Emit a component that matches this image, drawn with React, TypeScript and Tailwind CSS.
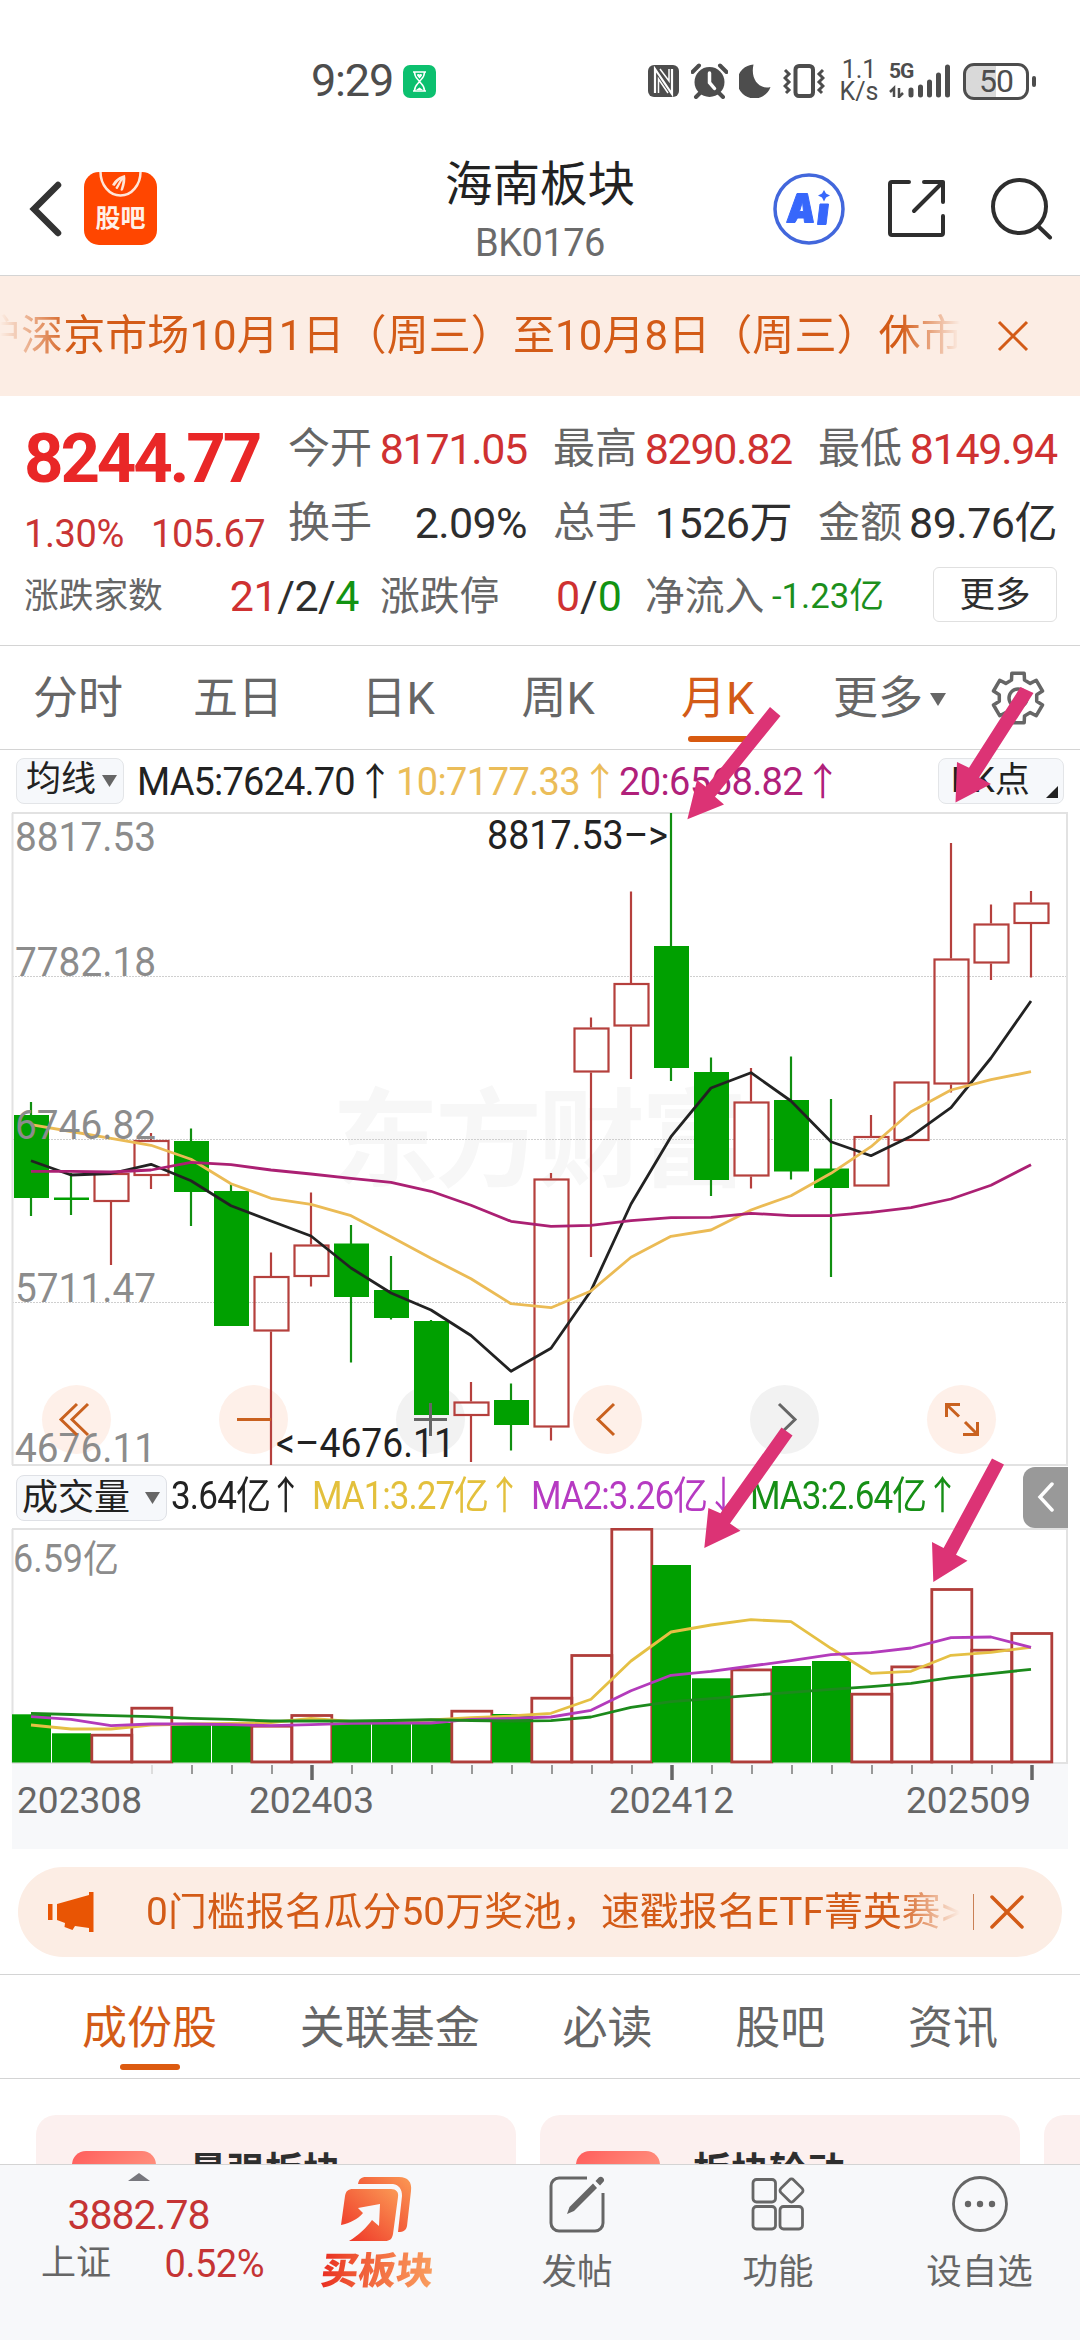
import React from "react";

const FONT = "font-[Roboto,'Noto_Sans_CJK_SC',sans-serif]";

type Candle = { up: boolean; high: number; top: number; bottom: number; low: number };

const c = (up: boolean, high: number, top: number, bottom: number, low: number): Candle => ({ up, high, top, bottom, low });

const CANDLES: Candle[] = [
  c(false, 1102, 1115, 1198, 1216),
  c(false, 1173, 1197.5, 1200, 1215),
  c(true, 1173, 1173, 1202, 1265),
  c(true, 1133, 1140, 1176, 1189),
  c(false, 1128.5, 1141, 1192, 1226),
  c(false, 1184, 1191, 1326, 1326),
  c(true, 1252.5, 1276, 1331.5, 1465),
  c(true, 1192.5, 1244.5, 1277, 1286.5),
  c(false, 1225, 1243.5, 1297, 1362.5),
  c(false, 1256, 1290, 1318, 1319.5),
  c(false, 1320, 1321, 1415, 1415),
  c(true, 1382, 1401.5, 1416, 1462),
  c(false, 1383.5, 1400, 1425, 1450.5),
  c(true, 1173, 1178.5, 1427.5, 1440.5),
  c(true, 1017.5, 1027.5, 1072.5, 1257),
  c(true, 891.5, 983, 1026.5, 1079),
  c(false, 813, 946, 1068, 1081),
  c(false, 1057.5, 1072, 1180, 1196),
  c(true, 1068, 1101.5, 1176.5, 1188.5),
  c(false, 1056.5, 1100, 1171.5, 1179.5),
  c(false, 1099, 1168.5, 1188, 1277),
  c(true, 1115, 1136, 1186.5, 1186.5),
  c(true, 1081.5, 1081.5, 1141, 1141),
  c(true, 843, 958.5, 1084.5, 1092.5),
  c(true, 904.5, 923.5, 963.5, 980),
  c(true, 891, 902.5, 924, 977.5),
];

const MA5 = [1160.7, 1175, 1173.5, 1164.3, 1180.7, 1205.7, 1221, 1236, 1268, 1293, 1310, 1335.5, 1371.3, 1348.3, 1290.7, 1204, 1136.7, 1088, 1072.7, 1101, 1141.7, 1155.7, 1136.3, 1107.7, 1058, 1001];
const MA10 = [1124.7, 1131.5, 1138.3, 1145.3, 1159.3, 1183.7, 1198.3, 1204.3, 1215.7, 1236.7, 1258.3, 1278.7, 1303.7, 1307.7, 1291, 1257.3, 1236.3, 1230, 1210, 1195.7, 1173.3, 1146.7, 1111.7, 1090, 1079.7, 1071.7];
const MA20 = [1171.3, 1171.3, 1172, 1170, 1162.3, 1164.7, 1170, 1174, 1178.3, 1182.3, 1191.3, 1205.3, 1221.3, 1226.3, 1225.3, 1220.7, 1217.7, 1217.3, 1213.3, 1215.7, 1215.7, 1212.3, 1207.7, 1199, 1185.3, 1164.7];

const VOLUME_TOPS = [1714.3, 1733.3, 1734, 1707, 1724.5, 1723.5, 1725, 1714.3, 1723.5, 1723, 1723, 1710, 1714, 1697, 1654.3, 1528, 1565, 1678.3, 1668.7, 1666, 1661, 1693, 1665.7, 1588.3, 1649, 1632.3];
const VMA1 = [1725, 1729, 1729, 1725, 1724, 1723.5, 1722.5, 1718.5, 1721.5, 1721.7, 1720, 1717.7, 1716, 1713.3, 1699.3, 1661, 1632, 1625, 1619.7, 1621.7, 1648.3, 1673.3, 1671.3, 1655.3, 1652.3, 1647.3];
const VMA2 = [1716.7, 1719.3, 1725.7, 1724, 1724, 1724.7, 1725.7, 1724.7, 1723.3, 1723, 1723, 1719.3, 1718.3, 1717, 1710.3, 1690.7, 1675.3, 1671.3, 1666, 1660.7, 1654.7, 1652.7, 1648, 1637.7, 1637, 1647.3];
const VMA3 = [1713.3, 1714.5, 1715.6, 1716.7, 1718.3, 1719.3, 1721, 1721, 1721, 1720.5, 1719.7, 1720.5, 1721, 1720.7, 1717, 1707.3, 1701.7, 1698.7, 1695.3, 1692.3, 1689.3, 1686.7, 1683.3, 1677.7, 1673.7, 1669.3];

const cx = (i: number) => 31 + 40 * i;
const line = (ys: number[]) => ys.map((y, i) => `${cx(i)},${y}`).join(" ");

const GREEN = "#00a000";
const RED = "#b5403d";

function gearPath() {
  const pts: string[] = [];
  for (let k = 0; k < 6; k++) {
    const base = -90 + k * 60;
    for (const [da, r] of [[-20, 19], [-14, 25.5], [14, 25.5], [20, 19]]) {
      const a = ((base + da) * Math.PI) / 180;
      pts.push(`${(27 + r * Math.cos(a)).toFixed(1)},${(27 + r * Math.sin(a)).toFixed(1)}`);
    }
  }
  return `M${pts.join("L")}Z`;
}

function StatusBar() {
  return (
    <div className="flex h-[110px] items-center pt-[52px] text-[#4d4d4d]">
      <span className="ml-[311px] w-[92px] text-[45px] leading-[58px] tracking-[-1.200px]">9:29</span>
      <svg className="h-[33px] w-[33px]" viewBox="0 0 33 33">
        <rect width="33" height="33" rx="7" fill="#0cc06f" />
        <path d="M10 7h13M10 26h13M11.500 7c0 6 3.500 7 5 9.500c1.500-2.500 5-3.500 5-9.500M11.500 26c0-6 3.500-7 5-9.500c1.500 2.500 5 3.500 5 9.500" fill="none" stroke="#fff" strokeWidth="1.500" />
        <path d="M16.500 13.500l-2.500-3a1.400 1.400 0 0 1 2.500-1a1.400 1.400 0 0 1 2.500 1zM13 25l3.500-2.500l3.500 2.500z" fill="#fff" />
      </svg>
      <svg className="ml-[212px] h-[34px] w-[31px]" viewBox="0 0 31 34">
        <rect x="0" y="1" width="31" height="32" rx="6" fill="#4d4d4d" />
        <path d="M7 29V5L24 30V5" fill="none" stroke="#fff" strokeWidth="2.200" />
        <path d="M10.500 29V15L20 29M12 5l9 12V5" fill="none" stroke="#fff" strokeWidth="1.500" />
      </svg>
      <svg className="ml-[12px] h-[36px] w-[37px]" viewBox="0 0 37 36">
        <circle cx="18.500" cy="19" r="15" fill="#4d4d4d" />
        <path d="M1.500 9L8 2.500M35.500 9L29 2.500M5 34l4-4M32 34l-4-4" stroke="#4d4d4d" strokeWidth="4" strokeLinecap="round" />
        <path d="M18.500 10v9.500l5 6" fill="none" stroke="#fff" strokeWidth="3.500" strokeLinecap="round" />
      </svg>
      <svg className="ml-[11px] h-[34px] w-[32px]" viewBox="0 0 32 34">
        <path d="M14.500 0.500A17 17 0 1 0 31.500 23C21 26 11 16 14.500 0.500z" fill="#4d4d4d" />
      </svg>
      <svg className="ml-[12px] h-[34px] w-[42px]" viewBox="0 0 42 34">
        <rect x="12.500" y="2" width="17.500" height="30" rx="3.500" fill="none" stroke="#4d4d4d" strokeWidth="4" />
        <path d="M2 6l4 4-4 4 4 4-4 4 4 4-3 3M40 6l-4 4 4 4-4 4 4 4-4 4 3 3" fill="none" stroke="#4d4d4d" strokeWidth="3" />
      </svg>
      <div className="ml-[16px] flex w-[36px] flex-col items-center text-[25px] leading-[22px]">
        <span>1.1</span>
        <span>K/s</span>
      </div>
      <div className="relative ml-[12px] h-[34px] w-[61px]">
        <span className="absolute left-0 top-[-3px] text-[21px] leading-[21px] font-bold tracking-[-1px]">5G</span>
        <svg className="h-[34px] w-[61px]" viewBox="0 0 61 34">
          <path d="M5 33V24L1 28M10 24v9l4-4" fill="none" stroke="#4d4d4d" strokeWidth="2.500" />
          <path d="M22 26v5M31.500 23v8M40.500 18v13M49.500 11v20M58.500 3v28" stroke="#4d4d4d" strokeWidth="5" strokeLinecap="round" />
        </svg>
      </div>
      <div className="ml-[13px] flex h-[37px] w-[66px] items-center justify-center rounded-[11px] border-[3px] border-[#4d4d4d] bg-linear-to-r from-[#d9d9d9] from-50% to-white to-50% text-[32px] leading-[32px] tracking-[-1px]">50</div>
      <div className="ml-[3px] h-[11px] w-[4px] rounded-full bg-[#4d4d4d]" />
    </div>
  );
}

function Header() {
  return (
    <div className="flex h-[166px] items-center border-b border-[#d4d4d4] pt-[32px]">
      <div className="flex w-[400px] items-center gap-[20px] pl-[28px]">
        <svg className="h-[60px] w-[36px]" viewBox="0 0 36 60">
          <path d="M30 6L6 30L30 54" fill="none" stroke="#333" strokeWidth="6.500" strokeLinecap="round" />
        </svg>
        <div className="relative flex h-[73px] w-[73px] justify-center overflow-hidden rounded-[15px] bg-[#ff4600]">
          <svg className="absolute left-0 top-0 h-[30px] w-[73px]" viewBox="0 0 73 30">
            <path d="M16.500 0a20 23.500 0 0 0 40 0" fill="none" stroke="#ffe6d9" strokeWidth="2.500" />
            <path d="M28 13c3-6 8-9 13-10c1 4 0 10-2 15c-1 1-2 1-2.500 0c1-4 2-7 2-10c-2 3-3 6-5 9c-1 0-2-0.500-2-1.500c2-3 3-5 5-8c-3 2-4 4-6 6.500z" fill="#ffe6d9" />
          </svg>
          <span className="mt-[33px] text-[25px] leading-[28px] font-bold text-[#fff0e8]">股吧</span>
        </div>
      </div>
      <div className="mt-[11px] flex w-[280px] flex-col items-center">
        <h1 className="text-[47.500px] leading-[60px] text-[#222]">海南板块</h1>
        <span className="mt-[-2px] text-[38px] leading-[60px] tracking-[-0.500px] text-[#6b6b6b]">BK0176</span>
      </div>
      <div className="flex w-[400px] items-center pl-[93px]">
        <svg className="h-[72px] w-[72px]" viewBox="0 0 72 72">
          <circle cx="36" cy="36" r="34" fill="none" stroke="#4267dc" strokeWidth="3.500" />
          <path fillRule="evenodd" d="M24 20.500h10.500L40.500 49.500H31.500L31 45H24.500L22 49.500H13.500zM29.500 28.500L26.500 38.500H30.500z" fill="#3767fb" stroke="#3767fb" strokeWidth="1" strokeLinejoin="round" />
          <path d="M47 31h8.500L53 51.500h-8.500z" fill="#3767fb" stroke="#3767fb" strokeWidth="1" strokeLinejoin="round" />
          <path d="M51 17l2 3.500l4 2l-4 2l-2 4l-2-4l-4-2l4-2z" fill="#3767fb" />
        </svg>
        <svg className="ml-[41px] h-[61px] w-[61px]" viewBox="0 0 61 61">
          <path d="M23 4H6a2 2 0 0 0-2 2v49a2 2 0 0 0 2 2h49a2 2 0 0 0 2-2V38M38 4h19v20M57 4L28 33" fill="none" stroke="#2e2e2e" strokeWidth="4" strokeLinecap="round" strokeLinejoin="round" />
        </svg>
        <svg className="ml-[44px] h-[62px] w-[62px]" viewBox="0 0 62 62">
          <circle cx="28.500" cy="28.500" r="26.500" fill="none" stroke="#2e2e2e" strokeWidth="4" />
          <path d="M47 48l12 11.500" stroke="#2e2e2e" strokeWidth="4" strokeLinecap="round" />
        </svg>
      </div>
    </div>
  );
}

function Notice() {
  return (
    <div className="flex h-[120px] items-center bg-[#fcede4] text-[#d35b17]">
      <div className="w-[960px] overflow-hidden whitespace-nowrap mask-[linear-gradient(to_right,transparent_0,black_70px,black_900px,transparent_960px)]">
        <span className="ml-[-21px] text-[42px] leading-[60px] tracking-[0.080px]">沪深京市场10月1日（周三）至10月8日（周三）休市</span>
      </div>
      <svg className="ml-[37px] h-[32px] w-[32px]" viewBox="0 0 32 32">
        <path d="M2 2l28 28M30 2L2 30" stroke="#d35b17" strokeWidth="3" />
      </svg>
    </div>
  );
}

function Stat({ label, value, className }: { label: string; value: string; className: string }) {
  return (
    <div className="flex h-[50px] items-center justify-between pt-[3px] whitespace-nowrap">
      <span className="text-[42px] leading-[50px] text-[#666]">{label}</span>
      <span className={`text-[43px] leading-[50px] ${className}`}>{value}</span>
    </div>
  );
}

function Quote() {
  return (
    <div className="h-[249px]">
      <div className="flex h-[171px]">
        <div className="w-[288px] pl-[24px] text-[#c93434]">
          <div className="mt-[23px] text-[69px] leading-[80px] font-bold tracking-[-3.200px] text-[#e92727]">8244.77</div>
          <div className="mt-[10px] flex gap-[27px] text-[38px] leading-[50px] tracking-[-0.400px]">
            <span>1.30%</span>
            <span>105.67</span>
          </div>
        </div>
        <div className="mt-[26px] grid w-[769px] grid-cols-3 content-start gap-x-[26px] gap-y-[24px]">
          <Stat label="今开" value="8171.05" className="tracking-[-1.300px] text-[#cf3131]" />
          <Stat label="最高" value="8290.82" className="tracking-[-1.300px] text-[#cf3131]" />
          <Stat label="最低" value="8149.94" className="tracking-[-1.300px] text-[#cf3131]" />
          <Stat label="换手" value="2.09%" className="tracking-[-0.600px] text-[#2e2e2e]" />
          <Stat label="总手" value="1526万" className="tracking-[-0.500px] text-[#2e2e2e]" />
          <Stat label="金额" value="89.76亿" className="tracking-[-0.500px] text-[#2e2e2e]" />
        </div>
      </div>
      <div className="flex h-[55px] items-center whitespace-nowrap text-[#666]">
        <span className="mt-[4px] ml-[24px] w-[140px] text-[34.700px]">涨跌家数</span>
        <span className="mt-[3px] w-[195px] text-right text-[43px] tracking-[-0.500px] text-[#2e2e2e]">
          <span className="text-[#cf3131]">21</span>/2/<span className="text-[#129312]">4</span>
        </span>
        <span className="mt-[4px] ml-[21px] w-[120px] text-[39.800px]">涨跌停</span>
        <span className="mt-[3px] w-[122px] text-right text-[43px] text-[#2e2e2e]">
          <span className="text-[#cf3131]">0</span>/<span className="text-[#129312]">0</span>
        </span>
        <span className="mt-[4px] ml-[23px] w-[127px] text-[39.800px]">净流入</span>
        <span className="mt-[3px] w-[161px] text-[34.700px] text-[#1c8f1c]">-1.23亿</span>
        <button className="h-[55px] w-[124px] rounded-[6px] border border-[#e0e0e0] text-[35.500px] leading-[50px] text-[#2e2e2e]">更多</button>
      </div>
    </div>
  );
}

function PeriodTabs() {
  return (
    <div className="flex h-[105px] items-center border-y border-[#d4d4d4] pt-[3px] text-[45px] text-[#666]">
      {["分时", "五日", "日K", "周K"].map((t) => (
        <span key={t} className="-ml-[2px] w-[162px] pr-[2px] text-center">{t}</span>
      ))}
      <span className="relative flex h-full w-[160px] items-center justify-center pr-[5px] text-[#d35b17]">
        月K
        <span className="absolute bottom-[7px] left-[48px] h-[6px] w-[62px] rounded-full bg-[#d85a10]" />
      </span>
      <span className="flex w-[180px] items-center gap-[7px] pl-[33px]">
        更多
        <svg className="h-[13px] w-[16px]" viewBox="0 0 16 13"><path d="M0 0h16L8 13z" fill="#666" /></svg>
      </span>
      <svg className="mb-[3px] ml-[11px] h-[54px] w-[54px]" viewBox="0 0 54 54">
        <path d={gearPath()} fill="none" stroke="#666" strokeWidth="3.500" strokeLinejoin="round" />
        <circle cx="27" cy="27" r="9" fill="none" stroke="#666" strokeWidth="3.500" />
      </svg>
    </div>
  );
}

function MaRow() {
  return (
    <div className="flex h-[62px] items-center pl-[16px] text-[38px] whitespace-nowrap text-[#222]">
      <div className="mb-[1px] flex h-[46px] w-[108px] items-center gap-[6px] rounded-[8px] border border-[#e3e5e8] bg-[#f6f8fb] pl-[9px] text-[35px]">
        均线
        <svg className="h-[12px] w-[15px] shrink-0" viewBox="0 0 15 12"><path d="M0 0h15L7.500 12z" fill="#666" /></svg>
      </div>
      <div className="ml-[13px] flex w-[259px] pt-[2px] tracking-[-0.850px]">
        MA5:7624.70<span className="flex w-[40px] justify-center">↑</span>
      </div>
      <div className="flex w-[223px] pt-[2px] tracking-[-0.600px] text-[#ebbd59]">
        10:7177.33<span className="flex w-[40px] justify-center">↑</span>
      </div>
      <div className="flex w-[223px] pt-[2px] tracking-[-0.600px] text-[#b0207a]">
        20:6568.82<span className="flex w-[40px] justify-center">↑</span>
      </div>
      <div className="relative mr-[16px] ml-auto flex h-[46px] w-[126px] items-center rounded-[8px] border border-[#e3e5e8] bg-[#f6f8fb] pl-[12px] text-[35px]">
        BK点
        <svg className="absolute right-[5px] bottom-[5px] h-[12px] w-[12px]" viewBox="0 0 12 12"><path d="M12 0v12H0z" fill="#222" /></svg>
      </div>
    </div>
  );
}

const AXIS_LABELS = [
  { text: "8817.53", y: 851 },
  { text: "7782.18", y: 976 },
  { text: "6746.82", y: 1138.5 },
  { text: "5711.47", y: 1302 },
  { text: "4676.11", y: 1461.5 },
];

function CandleChart() {
  return (
    <svg className="block h-[654px] w-[1080px] shrink-0" viewBox="0 812 1080 654">
      <text x="332" y="1178" fontSize="107" fontWeight="700" fill="#f7f7f7" textLength="416">东方财富</text>
      {[976.500, 1139.500, 1302.500].map((y) => (
        <path key={y} d={`M12 ${y}H1067`} stroke="#cfcfcf" strokeWidth="1" strokeDasharray="2 1" />
      ))}
      <path d="M12.500 813V1465M1067 813V1465M12 813H1068M12 1465H1068" fill="none" stroke="#e2e2e2" strokeWidth="2" />
      {[76.500, 253.500, 430.500, 607.500, 784.500, 961.500].map((x, i) => (
        <circle key={x} cx={x} cy="1419.500" r="34.500" fill={i === 2 || i === 4 ? "#f2f2f2" : "#fef0e9"} />
      ))}
      {CANDLES.map((k, i) =>
        k.up ? (
          <g key={i} stroke={RED} strokeWidth="2.200" fill="none">
            <path d={`M${cx(i)} ${k.high}V${k.top}M${cx(i)} ${k.bottom}V${k.low}`} />
            <rect x={cx(i) - 16.500} y={k.top + 1} width="34" height={k.bottom - k.top - 2} fill={i === 18 ? "#fff" : "none"} />
          </g>
        ) : (
          <g key={i}>
            <path d={`M${cx(i)} ${k.high}V${k.low}`} stroke="#108f10" strokeWidth="2.200" />
            <rect x={cx(i) - 17} y={k.top} width="35" height={k.bottom - k.top} fill={GREEN} />
          </g>
        ),
      )}
      <g fill="none" strokeWidth="2.800" strokeLinejoin="round">
        <polyline points={line(MA5)} stroke="#222" />
        <polyline points={line(MA10)} stroke="#ebbb55" />
        <polyline points={line(MA20)} stroke="#ab2073" />
      </g>
      <g fontSize="41" fill="#8c8c8c">
        {AXIS_LABELS.map((l) => (
          <text key={l.text} x="15" y={l.y} textLength="141" lengthAdjust="spacingAndGlyphs">{l.text}</text>
        ))}
      </g>
      <g fontSize="41" fill="#222">
        <text x="487" y="849" textLength="181" lengthAdjust="spacingAndGlyphs">8817.53–&gt;</text>
        <text x="276" y="1456.500" textLength="179" lengthAdjust="spacingAndGlyphs">&lt;–4676.11</text>
      </g>
      <g fill="none" stroke="#c9611f" strokeWidth="3">
        <path d="M77 1404L61 1419.500L77 1435M88 1404L72 1419.500L88 1435" />
        <path d="M237 1419.500H271" />
        <path d="M614 1404L598 1419.500L614 1435" />
        <path d="M946.500 1417V1404.500H960M947 1405L959 1416.500M977.500 1422V1434.500H963M977 1434L965 1422" />
        <path d="M414 1419.500H447M430.500 1403V1436M779 1404L795 1419.500L779 1435" stroke="#666" />
      </g>
    </svg>
  );
}

function VolumeRow() {
  return (
    <div className="flex h-[62px] items-center pl-[16px] text-[35px] tracking-[-1px] whitespace-nowrap text-[#222]">
      <div className="mt-[1px] flex h-[46px] w-[151px] items-center gap-[15px] rounded-[8px] border border-[#dfe1e6] bg-[#f6f8fb] pl-[5px] text-[36px] tracking-normal">
        成交量
        <svg className="h-[12px] w-[15px] shrink-0" viewBox="0 0 15 12"><path d="M0 0h15L7.500 12z" fill="#666" /></svg>
      </div>
      <div className="ml-[4px] flex w-[141px] scale-y-[1.120] tracking-[-0.800px]">
        3.64亿<span className="flex w-[30px] justify-center">↑</span>
      </div>
      <div className="flex w-[219px] scale-y-[1.120] text-[#e3c03c]">
        MA1:3.27亿<span className="flex w-[32px] justify-center">↑</span>
      </div>
      <div className="flex w-[219px] scale-y-[1.120] text-[#b63ac2]">
        MA2:3.26亿<span className="flex w-[32px] justify-center">↓</span>
      </div>
      <div className="flex w-[219px] scale-y-[1.120] text-[#168f16]">
        MA3:2.64亿<span className="flex w-[32px] justify-center">↑</span>
      </div>
      <div className="mr-[12px] ml-auto flex h-[61px] w-[45px] items-center justify-center rounded-l-[12px] bg-[#999]">
        <svg className="h-[30px] w-[18px]" viewBox="0 0 18 30"><path d="M15 2L3 15l12 13" fill="none" stroke="#fff" strokeWidth="3.500" strokeLinecap="round" /></svg>
      </div>
    </div>
  );
}

const DATES = [
  { text: "202308", x: 17 },
  { text: "202403", x: 249 },
  { text: "202412", x: 609 },
  { text: "202509", x: 906 },
];

function VolumeChart() {
  return (
    <svg className="block h-[321px] w-[1080px] shrink-0" viewBox="0 1528 1080 321">
      <rect x="12" y="1764" width="1056" height="85" fill="#f7f8fa" />
      <path d="M12.500 1529V1763M1067 1529V1763M12 1529H1068M12 1763H1068" fill="none" stroke="#e2e2e2" strokeWidth="2" />
      <text x="13" y="1572" fontSize="38" fill="#8c8c8c" textLength="106" lengthAdjust="spacingAndGlyphs">6.59亿</text>
      {CANDLES.map((k, i) =>
        k.up ? (
          <rect key={i} x={cx(i) - 19.200} y={VOLUME_TOPS[i] + 1.200} width="40" height={1762.500 - VOLUME_TOPS[i] - 1.800} fill="none" stroke="#b03d3a" strokeWidth="2.800" />
        ) : (
          <rect key={i} x={cx(i) - 19} y={VOLUME_TOPS[i]} width="39" height={1762.500 - VOLUME_TOPS[i]} fill={GREEN} />
        ),
      )}
      <g fill="none" strokeWidth="2.800" strokeLinejoin="round">
        <polyline points={line(VMA1)} stroke="#e5c044" />
        <polyline points={line(VMA2)} stroke="#b33bbb" />
        <polyline points={line(VMA3)} stroke="#1c8a1c" />
      </g>
      {VOLUME_TOPS.map((_, i) =>
        i < 3 ? null : i === 7 || i === 16 || i === 25 ? (
          <path key={i} d={`M${cx(i) + 1} 1765V1780`} stroke="#666" strokeWidth="3.500" />
        ) : (
          <path key={i} d={`M${cx(i) + 1} 1765V1774`} stroke={i === 3 ? "#ddd" : "#999"} strokeWidth="2" />
        ),
      )}
      <g fontSize="37.500" fill="#666">
        {DATES.map((d) => (
          <text key={d.text} x={d.x} y="1812.500" textLength="125" lengthAdjust="spacingAndGlyphs">{d.text}</text>
        ))}
      </g>
    </svg>
  );
}

function Banner() {
  return (
    <div className="mx-[18px] mt-[18px] flex h-[90px] shrink-0 items-center rounded-full bg-[#fcede4] text-[#d35b17]">
      <svg className="ml-[30px] h-[40px] w-[46px]" viewBox="0 0 46 40">
        <path d="M0 12h4.500v16H0zM9 12L41 3V0h4.500v40H41v-4l-14-2l-2.500 4l-8-3l.500-4l-8-3z" fill="#e95504" />
      </svg>
      <div className="ml-[52px] w-[814px] overflow-hidden whitespace-nowrap mask-[linear-gradient(to_right,black_750px,transparent_814px)]">
        <span className="text-[38.800px] leading-[60px] tracking-[0.120px]">0门槛报名瓜分50万奖池，速戳报名ETF菁英赛&gt;</span>
      </div>
      <div className="ml-[13px] h-[36px] w-[1px] bg-[#c98055]" />
      <svg className="ml-[16px] h-[34px] w-[34px]" viewBox="0 0 34 34">
        <path d="M2 2l30 30M32 2L2 32" stroke="#d35b17" strokeWidth="3.500" strokeLinecap="round" />
      </svg>
    </div>
  );
}

function SectionTabs() {
  return (
    <div className="mt-[17px] flex h-[105px] shrink-0 items-center justify-between border-y border-[#d4d4d4] px-[82px] pt-[4px] text-[45px] text-[#666]">
      <span className="relative flex h-full items-center justify-center text-[#d35b17]">
        成份股
        <span className="absolute bottom-[8px] h-[6px] w-[60px] rounded-full bg-[#dc5a10]" />
      </span>
      {["关联基金", "必读", "股吧", "资讯"].map((t) => (
        <span key={t}>{t}</span>
      ))}
    </div>
  );
}

function Cards() {
  return (
    <div className="flex h-[85px] shrink-0 gap-[24px] overflow-hidden pt-[36px] pl-[36px]">
      {["最强板块", "板块轮动", ""].map((t) => (
        <div key={t} className="flex h-[160px] w-[480px] shrink-0 rounded-[20px] bg-[#fcf0ef] pt-[36px] pl-[36px]">
          {t && <div className="h-[84px] w-[84px] rounded-[14px] bg-linear-to-br from-[#ff5c5c] to-[#ffae94]" />}
          <span className="ml-[33px] text-[38px] leading-[40px] font-bold text-[#2e2e2e]">{t}</span>
        </div>
      ))}
    </div>
  );
}

function BottomItem({ label, children, className }: { label: string; children: React.ReactNode; className: string }) {
  return (
    <div className={`flex flex-col items-center ${className}`}>
      <div className="mt-[8px] flex h-[62px] items-center">{children}</div>
      <span className="mt-[12px] text-[35.500px] leading-[50px]">{label}</span>
    </div>
  );
}

function BottomBar() {
  return (
    <div className="flex h-[176px] shrink-0 border-t border-[#d4d4d4] bg-[#f7f8fa] text-[#666]">
      <div className="flex w-[277px] flex-col items-center text-[#c53434]">
        <svg className="mt-[8px] h-[8px] w-[22px]" viewBox="0 0 22 8"><path d="M0 8L11 0l11 8z" fill="#77777d" /></svg>
        <span className="mt-[9px] text-[41px] leading-[50px] tracking-[-1px]">3882.78</span>
        <div className="flex w-full items-center justify-between pr-[13px] pl-[41px] leading-[48px]">
          <span className="text-[35px] text-[#666]">上证</span>
          <span className="text-[38px] tracking-[-0.500px]">0.52%</span>
        </div>
      </div>
      <div className="flex w-[200px] flex-col items-center">
        <svg className="mt-[11px] h-[68px] w-[72px]" viewBox="0 0 72 68">
          <defs>
            <linearGradient id="buy" x1="0" y1="1" x2="1" y2="0">
              <stop offset="0" stopColor="#ee3025" />
              <stop offset="1" stopColor="#fb9a55" />
            </linearGradient>
          </defs>
          <path d="M17 8c1-5 3-7 8-7h33c9 0 13 5 12 14l-4 35c-1 4-3 6-9 6l4-36c0-7-3-11-9-12z" fill="url(#buy)" />
          <path d="M4 20c1-5 3-7 8-7h38c5 0 8 3 7 8l-5 37c-1 5-3 7-8 7H8c9-5 18-14 23-21l7 6l1-22l-22 4l5 5C17 43 9 47 0 49z" fill="url(#buy)" />
        </svg>
        <span className="mt-[4px] -skew-x-6 bg-linear-to-r from-[#e8271f] to-[#f9a061] bg-clip-text px-[2px] text-[37.500px] leading-[46px] font-black text-transparent">买板块</span>
      </div>
      <BottomItem label="发帖" className="w-[200px]">
        <svg className="h-[58px] w-[56px]" viewBox="0 0 56 58">
          <path d="M38 3H10a8 8 0 0 0-8 8v37a8 8 0 0 0 8 8h36a8 8 0 0 0 8-8V18" fill="none" stroke="#666" strokeWidth="3" />
          <path d="M44 8.500l4 4.500L25 36l-7 3l2.500-7zM46.500 6l3-3.200a3 3 0 0 1 4.500 4.500l-3 3.200z" fill="#666" />
        </svg>
      </BottomItem>
      <BottomItem label="功能" className="w-[202px]">
        <svg className="h-[54px] w-[54px]" viewBox="0 0 54 54">
          <g fill="none" stroke="#666" strokeWidth="2.800">
            <rect x="2" y="2.500" width="22.500" height="22.500" rx="3.500" />
            <rect x="2" y="29.500" width="22.500" height="22.500" rx="3.500" />
            <rect x="29" y="29.500" width="22.500" height="22.500" rx="3.500" />
            <rect x="31.500" y="4.500" width="18" height="18" rx="3" transform="rotate(45 40.500 13.500)" />
          </g>
        </svg>
      </BottomItem>
      <BottomItem label="设自选" className="w-[201px]">
        <svg className="h-[58px] w-[58px]" viewBox="0 0 58 58">
          <circle cx="29" cy="29" r="26.500" fill="none" stroke="#666" strokeWidth="2.800" />
          <g fill="#666"><circle cx="17" cy="29" r="3.200" /><circle cx="29" cy="29" r="3.200" /><circle cx="41" cy="29" r="3.200" /></g>
        </svg>
      </BottomItem>
    </div>
  );
}

function Annotations() {
  return (
    <svg className="pointer-events-none absolute left-0 top-0 h-[2340px] w-[1080px]" viewBox="0 0 1080 2340">
      <g fill="#dc3375">
        <path d="M770 707L780.500 716L715 796.700L724 804.500L687.400 819.300L697 780L706 786.700z" />
        <path d="M1020.500 687L1033.500 693L979 777.500L991 784L955.500 802.500L957 762L969 767.700z" />
        <path d="M781.500 1427.500L792.500 1435.500L730 1523.500L740.500 1530.700L704.300 1548L708.400 1508L720.400 1513.300z" />
        <path d="M992 1458.500L1004 1464.500L956 1554.700L967.500 1560.700L933.300 1582L932 1542L943.600 1548z" />
      </g>
    </svg>
  );
}

export default function App() {
  return (
    <div className={`relative flex h-[2340px] w-[1080px] flex-col overflow-hidden bg-white ${FONT}`}>
      <StatusBar />
      <Header />
      <Notice />
      <Quote />
      <PeriodTabs />
      <MaRow />
      <CandleChart />
      <VolumeRow />
      <VolumeChart />
      <Banner />
      <SectionTabs />
      <Cards />
      <BottomBar />
      <Annotations />
    </div>
  );
}
